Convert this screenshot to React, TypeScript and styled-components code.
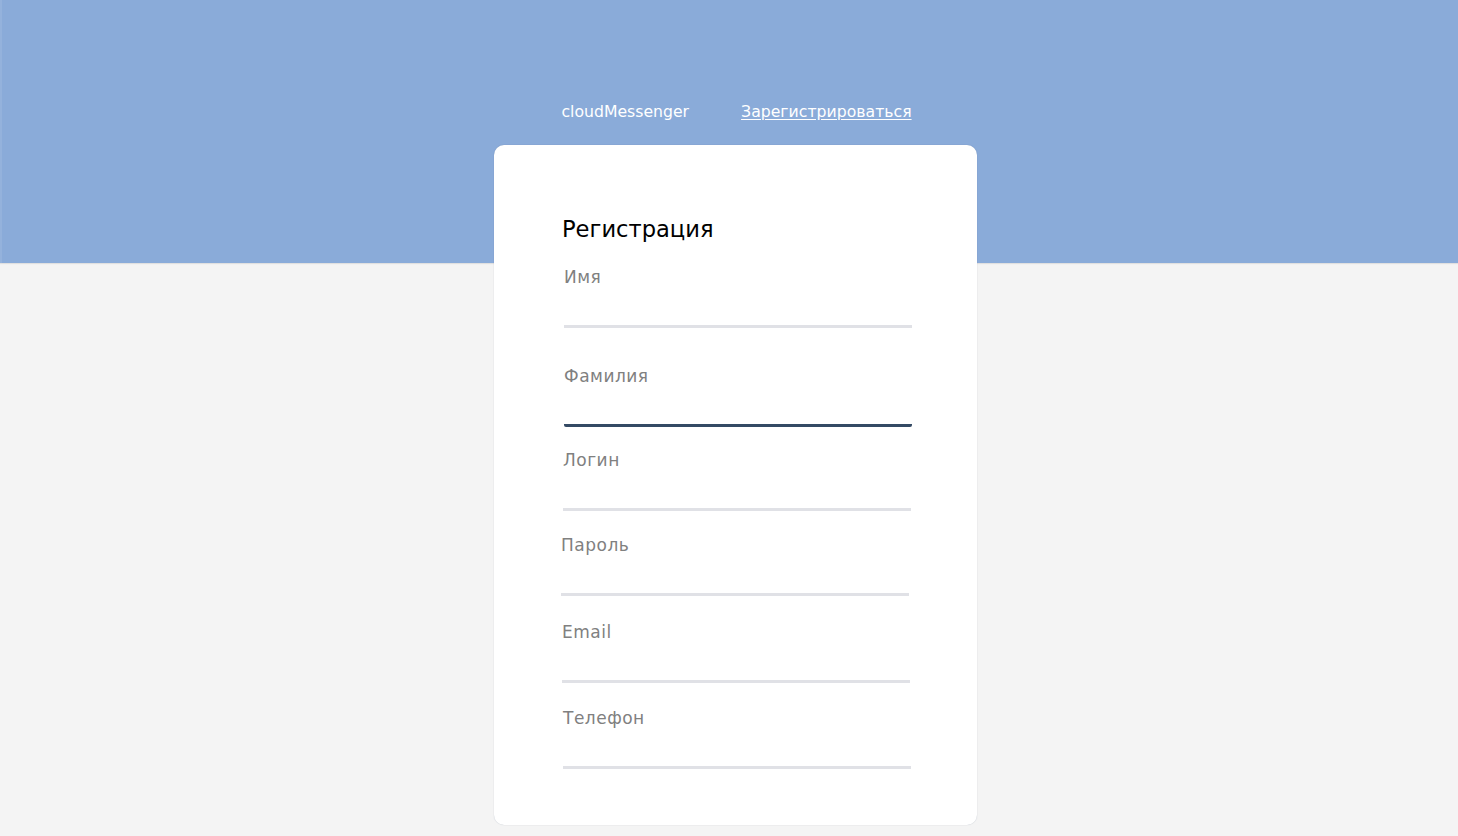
import React from "react";
import styled, { createGlobalStyle } from "styled-components";

const Global = createGlobalStyle`
  html, body { margin: 0; padding: 0; }
  body {
    background: #f4f4f4;
    font-family: "DejaVu Sans", "Liberation Sans", sans-serif;
  }
  * { box-sizing: border-box; }
`;

const Page = styled.div`
  min-height: 836px;
  background: #f4f4f4;
`;

const Hero = styled.header`
  height: 263px;
  background: #8aabd9;
  border-left: 2px solid #94b2dc;
  box-shadow: 0 1px 1px rgba(0, 0, 0, 0.08);
  padding: 102px 0 0 13px;
  display: flex;
  justify-content: center;
  align-items: flex-start;
`;

const Nav = styled.nav`
  width: 483px;
  display: flex;
  justify-content: center;
  gap: 52px;
  font-size: 15.7px;
  line-height: 19px;
  color: #ffffff;
`;

const Brand = styled.span`
  color: #ffffff;
`;

const NavLink = styled.a`
  color: #ffffff;
  text-decoration: underline;
  text-underline-offset: 2px;
  cursor: pointer;
`;

const Main = styled.main`
  display: flex;
  justify-content: center;
  padding-left: 13px;
  margin-top: -118px;
`;

const Card = styled.form`
  width: 483px;
  background: #ffffff;
  border-radius: 10px;
  box-shadow: 0 0 1px rgba(60, 80, 110, 0.35);
  padding: 71px 65px 56px 68px;
  display: flex;
  flex-direction: column;
`;

const Title = styled.h1`
  margin: 0 0 24px 0;
  font-size: 22.6px;
  line-height: 26px;
  font-weight: 400;
  color: #000000;
`;

const Field = styled.label<{ $top: number; $shift: number }>`
  display: flex;
  flex-direction: column;
  margin-top: ${(p) => p.$top}px;
  margin-left: ${(p) => p.$shift}px;
  width: 348px;
`;

const LabelText = styled.span`
  padding-top: 1px;
  font-size: 17px;
  line-height: 20px;
  letter-spacing: 0.5px;
  color: #808080;
`;

const Input = styled.input<{ $focused?: boolean }>`
  height: 41px;
  border: none;
  border-bottom: 3px solid ${(p) => (p.$focused ? "#344a64" : "#e0e1e6")};
  border-radius: ${(p) => (p.$focused ? "2px" : "0")};
  background: transparent;
  outline: none;
  padding: 0;
  font-family: inherit;
  font-size: 17px;
  color: #222;
`;

const fields = [
  { label: "Имя", top: 0, shift: 2, type: "text" },
  { label: "Фамилия", top: 37, shift: 2, type: "text", focused: true },
  { label: "Логин", top: 22, shift: 1, type: "text" },
  { label: "Пароль", top: 23, shift: -1, type: "password" },
  { label: "Email", top: 25, shift: 0, type: "email" },
  { label: "Телефон", top: 24, shift: 1, type: "tel" },
];

export default function App() {
  return (
    <Page>
      <Global />
      <Hero>
        <Nav>
          <Brand>cloudMessenger</Brand>
          <NavLink>Зарегистрироваться</NavLink>
        </Nav>
      </Hero>
      <Main>
        <Card onSubmit={(e) => e.preventDefault()}>
          <Title>Регистрация</Title>
          {fields.map((f) => (
            <Field key={f.label} $top={f.top} $shift={f.shift}>
              <LabelText>{f.label}</LabelText>
              <Input type={f.type} $focused={f.focused} />
            </Field>
          ))}
        </Card>
      </Main>
    </Page>
  );
}
